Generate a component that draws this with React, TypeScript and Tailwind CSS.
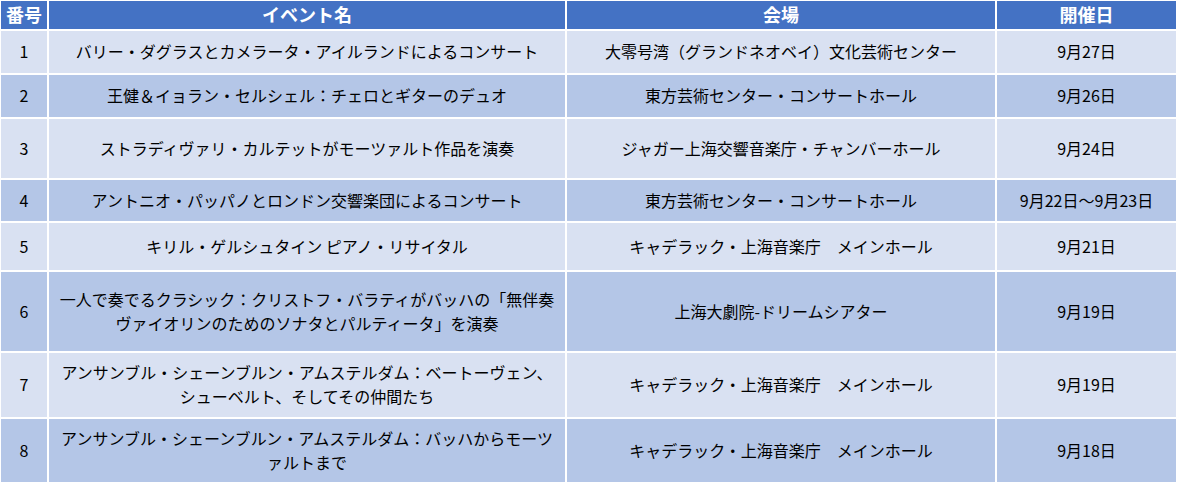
const rows = [
  { no: '1', name: ['バリー・ダグラスとカメラータ・アイルランドによるコンサート'], venue: '大零号湾（グランドネオベイ）文化芸術センター', date: '9月27日', h: 'h-[42px]' },
  { no: '2', name: ['王健＆イョラン・セルシェル：チェロとギターのデュオ'], venue: '東方芸術センター・コンサートホール', date: '9月26日', h: 'h-[42px]' },
  { no: '3', name: ['ストラディヴァリ・カルテットがモーツァルト作品を演奏'], venue: 'ジャガー上海交響音楽庁・チャンバーホール', date: '9月24日', h: 'h-[59px]' },
  { no: '4', name: ['アントニオ・パッパノとロンドン交響楽団によるコンサート'], venue: '東方芸術センター・コンサートホール', date: '9月22日～9月23日', h: 'h-[41px]' },
  { no: '5', name: ['キリル・ゲルシュタイン ピアノ・リサイタル'], venue: 'キャデラック・上海音楽庁　メインホール', date: '9月21日', h: 'h-[47px]' },
  { no: '6', name: ['一人で奏でるクラシック：クリストフ・バラティがバッハの「無伴奏', 'ヴァイオリンのためのソナタとパルティータ」を演奏'], venue: '上海大劇院-ドリームシアター', date: '9月19日', h: 'h-[79px]' },
  { no: '7', name: ['アンサンブル・シェーンブルン・アムステルダム：ベートーヴェン、', 'シューベルト、そしてその仲間たち'], venue: 'キャデラック・上海音楽庁　メインホール', date: '9月19日', h: 'h-[64px]' },
  { no: '8', name: ['アンサンブル・シェーンブルン・アムステルダム：バッハからモーツ', 'ァルトまで'], venue: 'キャデラック・上海音楽庁　メインホール', date: '9月18日', h: 'h-[63px]' },
];

export default function App() {
  return (
    <div className="w-[1178px] h-[485px] bg-white pt-px pl-px font-['Noto_Sans_CJK_JP','Noto_Sans',sans-serif] text-black">
      <div className="grid grid-cols-[46px_516px_428px_179px] gap-[2px]">
        {/* header */}
        {['番号', 'イベント名', '会場', '開催日'].map((t) => (
          <div key={t} className="h-[28px] pb-[2px] bg-[#4472c4] text-white font-bold text-[18px] leading-none flex items-center justify-center">
            {t}
          </div>
        ))}

        {rows.map((r, i) => {
          const bg = i % 2 === 0 ? 'bg-[#d9e1f2]' : 'bg-[#b4c6e7]';
          const cell = `${r.h} ${bg} pb-[2px] flex items-center justify-center text-[16px]`;
          return [
            <div key={r.no + 'a'} className={cell}>{r.no}</div>,
            <div key={r.no + 'b'} className={`${cell} flex-col leading-[24px] text-center`}>
              {r.name.map((line) => (
                <span key={line} className="whitespace-nowrap">{line}</span>
              ))}
            </div>,
            <div key={r.no + 'c'} className={`${cell} whitespace-pre`}>{r.venue}</div>,
            <div key={r.no + 'd'} className={cell}>{r.date}</div>,
          ];
        })}
      </div>
    </div>
  );
}
